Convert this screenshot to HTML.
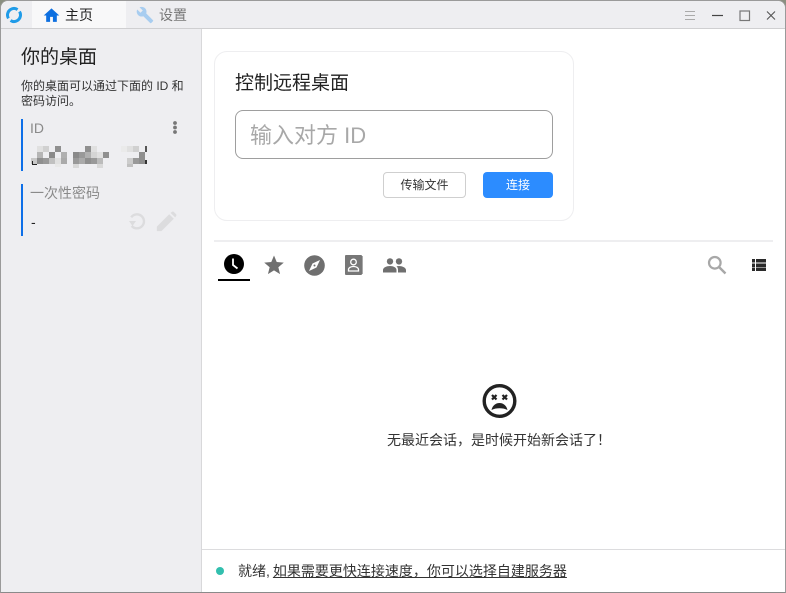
<!DOCTYPE html>
<html lang="zh"><head><meta charset="utf-8"><style>
html,body{margin:0;padding:0;width:786px;height:593px;overflow:hidden;background:#8a8f80}
*{box-sizing:border-box}
body{position:relative;font-family:"Liberation Sans","Noto Sans CJK SC",sans-serif;color:#222}
.a{position:absolute;white-space:nowrap}
svg{position:absolute;display:block}
#w{position:absolute;left:0;top:0;width:786px;height:593px;background:#fff;border-radius:8px 8px 0 0;overflow:hidden;border:1px solid #9a9a9a;border-bottom:1px solid #8a8a8a}
</style></head><body>
<div id="w"></div>
<div class="a" style="left:1px;top:1px;width:784px;height:27px;background:#eeeef1;border-radius:8px 8px 0 0"></div>
<div class="a" style="left:1px;top:28px;width:784px;height:1px;background:#cfcfd1"></div>
<div class="a" style="left:32px;top:1px;width:94px;height:27px;background:#f8f8f9"></div>
<div class="a" style="left:1px;top:29px;width:200px;height:563px;background:#eeeef1"></div>
<div class="a" style="left:201px;top:29px;width:1px;height:563px;background:#d8d8da"></div>

<svg style="left:5px;top:6px" width="18" height="18" viewBox="0 0 18 18"><circle cx="9" cy="9" r="6.500" fill="none" stroke="#1f9be8" stroke-width="3" stroke-dasharray="17.400 3" transform="rotate(-32 9 9)"/></svg>
<svg style="left:43px;top:7px" width="17" height="17" viewBox="0 0 24 24"><path d="M10 21v-7h4v7h5.500v-9H23L12 2 1 12h3.500v9z" fill="#0d6fe0"/></svg>
<div class="a" style="left:65px;top:7px;font-size:14px;line-height:17px;color:#222">主页</div>
<svg style="left:136px;top:6px" width="18" height="18" viewBox="0 0 24 24"><path d="M22.700 19l-9.100-9.100c.9-2.300.4-5-1.500-6.900-2-2-5-2.400-7.400-1.300L9 6 6 9 1.600 4.700C.4 7.100.9 10.100 2.900 12.100c1.900 1.900 4.600 2.400 6.900 1.500l9.100 9.100c.4.400 1 .4 1.400 0l2.300-2.300c.5-.4.500-1.100.1-1.400z" fill="#a8cdf0"/></svg>
<div class="a" style="left:159px;top:7px;font-size:14px;line-height:17px;color:#777">设置</div>

<svg style="left:685px;top:10px" width="92" height="12" viewBox="0 0 92 12" fill="none">
<path d="M0 1.500h10M0 5.500h10M0 9.500h10" stroke="#aaa" stroke-width="1"/>
<path d="M27 5.500h11" stroke="#444" stroke-width="1.200"/>
<rect x="55" y="1" width="9.500" height="9.500" stroke="#777" stroke-width="1.200"/>
<path d="M82 1.500l8 8M90 1.500l-8 8" stroke="#555" stroke-width="1.100"/>
</svg>

<div class="a" style="left:21px;top:45px;font-size:19px;line-height:25px;color:#222">你的桌面</div>
<div class="a" style="left:21px;top:79px;font-size:12px;line-height:15px;color:#333">你的桌面可以通过下面的 ID 和<br>密码访问。</div>

<div class="a" style="left:21px;top:119px;width:2px;height:52px;background:#0d6fe8"></div>
<div class="a" style="left:30px;top:120px;font-size:14px;line-height:16px;color:#8a8a8a">ID</div>
<svg style="left:172px;top:120px" width="6" height="15" viewBox="0 0 6 15"><circle cx="3" cy="3" r="1.900" fill="#777"/><circle cx="3" cy="7.500" r="1.900" fill="#777"/><circle cx="3" cy="12" r="1.900" fill="#777"/></svg>

<svg style="left:28px;top:140px" width="126" height="34" viewBox="28 140 126 34" shape-rendering="crispEdges">
<rect x="37" y="146" width="6" height="6" fill="#e0e0e0"/><rect x="43" y="146" width="6" height="6" fill="#d0d0d0"/><rect x="55" y="146" width="6" height="6" fill="#8f8f8f"/><rect x="85" y="146" width="6" height="6" fill="#8f8f8f"/><rect x="91" y="146" width="6" height="6" fill="#e0e0e0"/><rect x="121" y="146" width="6" height="6" fill="#eaeaea"/><rect x="127" y="146" width="6" height="6" fill="#e0e0e0"/><rect x="133" y="146" width="6" height="6" fill="#d0d0d0"/>
<rect x="37" y="152" width="6" height="6" fill="#b5b5b5"/><rect x="49" y="152" width="6" height="6" fill="#8a8a8a"/><rect x="61" y="152" width="6" height="6" fill="#b0b0b0"/><rect x="73" y="152" width="6" height="6" fill="#8a8a8a"/><rect x="79" y="152" width="6" height="6" fill="#999"/><rect x="85" y="152" width="6" height="6" fill="#b0b0b0"/><rect x="91" y="152" width="6" height="6" fill="#d5d5d5"/><rect x="97" y="152" width="6" height="6" fill="#e0e0e0"/><rect x="103" y="152" width="6" height="6" fill="#8f8f8f"/><rect x="139" y="152" width="6" height="6" fill="#8f8f8f"/>
<rect x="31" y="158" width="6" height="6" fill="#c8c8c8"/><rect x="37" y="158" width="6" height="6" fill="#8f8f8f"/><rect x="43" y="158" width="6" height="6" fill="#999"/><rect x="49" y="158" width="6" height="6" fill="#c0c0c0"/><rect x="55" y="158" width="6" height="6" fill="#e0e0e0"/><rect x="61" y="158" width="6" height="6" fill="#aaa"/><rect x="73" y="158" width="6" height="6" fill="#999"/><rect x="79" y="158" width="6" height="6" fill="#aaa"/><rect x="85" y="158" width="6" height="6" fill="#8f8f8f"/><rect x="91" y="158" width="6" height="6" fill="#999"/><rect x="97" y="158" width="6" height="6" fill="#bbb"/><rect x="127" y="158" width="6" height="6" fill="#ccc"/><rect x="133" y="158" width="6" height="6" fill="#999"/><rect x="139" y="158" width="6" height="6" fill="#8f8f8f"/>
<rect x="55" y="164" width="6" height="3" fill="#e8e8e8"/><rect x="73" y="164" width="6" height="4" fill="#d8d8d8"/><rect x="97" y="164" width="6" height="4" fill="#d8d8d8"/><rect x="127" y="164" width="6" height="3" fill="#c0c0c0"/>
<path d="M32 161h1v3h4v1h-5z" fill="#222"/><rect x="145" y="146" width="2" height="6" fill="#555"/><rect x="145" y="160" width="2" height="4" fill="#333"/>
</svg>

<div class="a" style="left:21px;top:184px;width:2px;height:52px;background:#0d6fe8"></div>
<div class="a" style="left:30px;top:185px;font-size:14px;line-height:17px;color:#8a8a8a">一次性密码</div>
<div class="a" style="left:31px;top:214px;font-size:14px;line-height:17px;color:#222">-</div>
<svg style="left:127px;top:212px" width="19" height="19" viewBox="0 0 19 19" fill="none"><path d="M5 4.500A7 7 0 1 1 4 13" stroke="#dcdcde" stroke-width="2.400" transform="rotate(-10 9.500 9.500)"/><path d="M2 9h7l-3.500 5z" fill="#dcdcde"/></svg>
<svg style="left:155px;top:211px" width="22" height="22" viewBox="0 0 24 24"><path d="M2 22v-5L15.500 3.500l5 5L7 22zM17 2l1.500-1a1.500 1.500 0 0 1 2 0l2.500 2.500a1.500 1.500 0 0 1 0 2L22 7z" fill="#dcdcde"/></svg>

<div class="a" style="left:214px;top:51px;width:360px;height:170px;background:#fff;border:1px solid #eeeef0;border-radius:13px"></div>
<div class="a" style="left:235px;top:71px;font-size:19px;line-height:26px;color:#222">控制远程桌面</div>
<div class="a" style="left:235px;top:110px;width:318px;height:49px;border:1px solid #9e9e9e;border-radius:8px;background:#fff"></div>
<div class="a" style="left:250px;top:121px;font-size:22px;line-height:30px;color:#a8a8a8">输入对方 ID</div>
<div class="a" style="left:383px;top:172px;width:83px;height:26px;border:1px solid #cfcfcf;border-radius:4px;background:#fff;text-align:center;font-size:12px;line-height:24px;color:#333">传输文件</div>
<div class="a" style="left:483px;top:172px;width:70px;height:26px;border-radius:4px;background:#2c8cff;text-align:center;font-size:12px;line-height:26px;color:#fff">连接</div>

<div class="a" style="left:214px;top:240px;width:559px;height:2px;background:#eeeef0"></div>

<svg style="left:223px;top:253px" width="22" height="22" viewBox="0 0 22 22"><circle cx="11" cy="11" r="10" fill="#000"/><path d="M10 5.500v6.500l4.500 3.500" fill="none" stroke="#fff" stroke-width="1.800"/></svg>
<div class="a" style="left:218px;top:279px;width:32px;height:2px;background:#000"></div>
<svg style="left:264px;top:255px" width="20" height="19" viewBox="0 0 22 21"><path d="M11 .5l3 7.300 7.800.6-6 5.100 1.900 7.600L11 17l-6.700 4.100 1.900-7.600-6-5.100L8 7.800z" fill="#6f6f6f"/></svg>
<svg style="left:304px;top:255px" width="21" height="21" viewBox="0 0 21 21"><circle cx="10.500" cy="10.500" r="10.300" fill="#6f6f6f"/><path d="M16 5l-3.500 7.500L5 16l3.500-7.500z" fill="#fff"/><circle cx="10.500" cy="10.500" r="1" fill="#6f6f6f"/></svg>
<svg style="left:345px;top:255px" width="18" height="20" viewBox="0 0 18 20"><rect x="0" y="0" width="17" height="20" rx="1" fill="#777"/><rect x="17" y="1" width="1" height="18" fill="#aaa"/><circle cx="8.500" cy="7" r="2.800" fill="none" stroke="#fff" stroke-width="1.300"/><path d="M3.500 16v-1.500c0-1.800 2.500-3 5-3s5 1.200 5 3V16z" fill="none" stroke="#fff" stroke-width="1.300"/></svg>
<svg style="left:383px;top:258px" width="23" height="15" viewBox="0 0 23 15"><circle cx="7" cy="3.400" r="3.200" fill="#6f6f6f"/><circle cx="16" cy="3.400" r="3.200" fill="#6f6f6f"/><path d="M0 14.500v-2.500c0-2.500 3.500-4 7-4s6.500 1.500 6.500 4v2.500zM15 14.500V12c0-1.500-.5-2.800-1.500-3.700.8-.2 1.700-.3 2.500-.3 3 0 7 1.500 7 4v2.500z" fill="#6f6f6f"/></svg>

<svg style="left:707px;top:255px" width="20" height="20" viewBox="0 0 20 20" fill="none"><circle cx="7.800" cy="7.800" r="5.800" stroke="#a8a8a8" stroke-width="2.200"/><path d="M12 12l6.500 6.500" stroke="#a8a8a8" stroke-width="2.400"/></svg>
<svg style="left:752px;top:259px" width="14" height="12" viewBox="0 0 14 12" shape-rendering="crispEdges"><path d="M0 0h3v3.500H0zM4 0h10v3.500H4zM0 4.300h3v3.500H0zM4 4.300h10v3.500H4zM0 8.500h3V12H0zM4 8.500h10V12H4z" fill="#2a2a2a"/></svg>

<svg style="left:482px;top:383px" width="36" height="36" viewBox="0 0 36 36" fill="none"><circle cx="17.500" cy="18" r="15.300" stroke="#222" stroke-width="3.400"/><path d="M10 12l4.500 4.500M14.500 12L10 16.500M20.500 12l4.500 4.500M25 12l-4.500 4.500" stroke="#222" stroke-width="2.200"/><path d="M9.500 27c1-4.700 4.500-7 8-7s7 2.300 8 7c-2.300-1.300-5-1.800-8-1.800s-5.700.5-8 1.800z" fill="#222"/></svg>
<div class="a" style="left:387px;top:432px;font-size:14px;line-height:17px;color:#333">无最近会话，是时候开始新会话了！</div>

<div class="a" style="left:202px;top:549px;width:583px;height:1px;background:#dcdcde"></div>
<div class="a" style="left:216px;top:567px;width:8px;height:8px;border-radius:50%;background:#32bfae"></div>
<div class="a" style="left:238px;top:563px;font-size:14px;line-height:17px;color:#333">就绪,<span style="margin-left:3px;text-decoration:underline">如果需要更快连接速度，你可以选择自建服务器</span></div>
</body></html>
